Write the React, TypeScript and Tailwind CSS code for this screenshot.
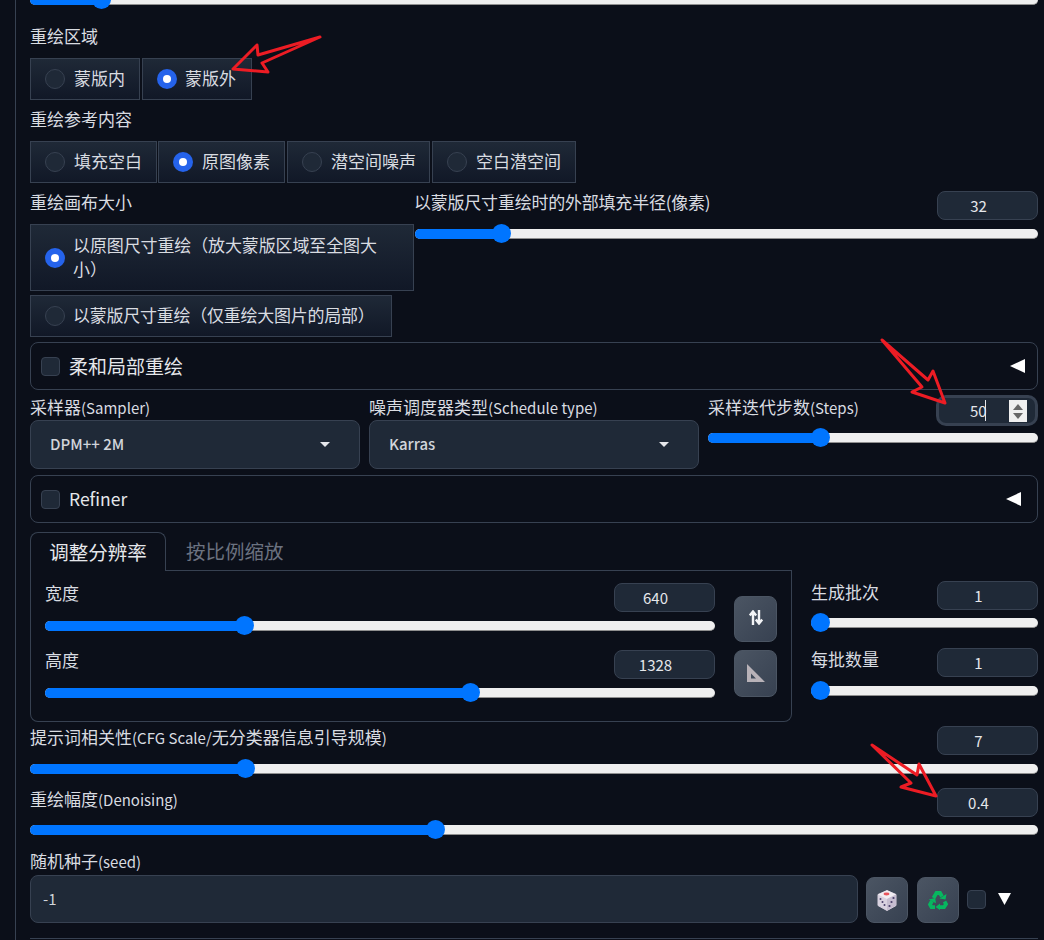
import React from "react";

const FONT = '"Noto Sans CJK SC", "Noto Sans", sans-serif';

function Slider({ thumb, className = "" }: { thumb: number; className?: string }) {
  return (
    <div className={`relative h-[10px] rounded-full bg-[#efefef] border-b border-[#8f8f8f] ${className}`}>
      <div className="absolute left-0 top-0 h-[10px] rounded-l-full bg-[#0075ff]" style={{ width: thumb }} />
      <div className="absolute top-[-5px] h-[19px] w-[19px] rounded-full bg-[#0075ff]" style={{ left: thumb - 9 }} />
    </div>
  );
}

function Latin({ children }: { children: React.ReactNode }) {
  return <span className="text-[15px]">{children}</span>;
}

function Label({ children, className = "" }: { children: React.ReactNode; className?: string }) {
  return <div className={`h-6 leading-6 text-[17px] text-[#d9dce1] whitespace-nowrap ${className}`}>{children}</div>;
}

function Num({ value, className = "" }: { value: string; className?: string }) {
  return (
    <div className={`w-[101px] h-[29px] shrink-0 rounded-lg border border-[#374151] bg-[#1f2937] pr-[18px] text-center text-[15px] leading-[27px] text-[#e5e7eb] ${className}`}>
      {value}
    </div>
  );
}

function Radio({ label, on, className = "", labelClass = "ml-[9px]" }: { label: React.ReactNode; on?: boolean; className?: string; labelClass?: string }) {
  return (
    <div className={`flex items-center border border-[#374151] bg-gradient-to-b from-[#1f2937] to-[#111827] pl-[14px] ${className}`}>
      {on ? (
        <span className="w-5 h-5 shrink-0 rounded-full bg-[#2563eb] flex items-center justify-center">
          <span className="w-2 h-2 rounded-full bg-white" />
        </span>
      ) : (
        <span className="w-5 h-5 shrink-0 rounded-full border border-[#374151] bg-[#1f2937]" />
      )}
      <span className={`pb-[2px] text-[17px] leading-[24px] text-[#d9dce1] ${labelClass}`}>{label}</span>
    </div>
  );
}

function Check({ className = "" }: { className?: string }) {
  return <span className={`block w-[19px] h-[19px] shrink-0 rounded border border-[#374151] bg-[#1f2937] ${className}`} />;
}

function Accordion({ title, triRight, titleClass }: { title: string; triRight: number; titleClass: string }) {
  return (
    <div className="h-[48px] rounded-lg border border-[#374151] flex items-center pl-[10px]">
      <Check />
      <span className={`ml-[9px] text-[#e5e7eb] ${titleClass}`}>{title}</span>
      <svg className="ml-auto" style={{ marginRight: triRight }} width="15" height="14" viewBox="0 0 15 14">
        <polygon points="0,7 15,0 15,14" fill="#ffffff" />
      </svg>
    </div>
  );
}

function Select({ value }: { value: string }) {
  return (
    <div className="h-[49px] rounded-lg border border-[#374151] bg-[#1f2937] flex items-center pl-[19px] pr-[29px] pb-px text-[15px] font-medium text-[#d1d5db]">
      <span>{value}</span>
      <svg className="ml-auto" width="10" height="5" viewBox="0 0 10 5">
        <polygon points="0,0 10,0 5,5" fill="#e5e7eb" />
      </svg>
    </div>
  );
}

function Dice() {
  return (
    <svg width="20" height="21" viewBox="0 0 20 21">
      <polygon points="10,0.5 19,4.5 19,15.5 10,20.5 1,15.5 1,4.5" fill="#d9d2e0" stroke="#d9d2e0" strokeWidth="1" strokeLinejoin="round" />
      <polygon points="10,0.5 19,4.5 10,9 1,4.5" fill="#f1edf2" />
      <polygon points="19,4.5 10,9 10,20.5 19,15.5" fill="#c6bdd0" />
      <ellipse cx="9.5" cy="4" rx="3" ry="1.4" fill="#e8545c" />
      <circle cx="3.5" cy="9" r="1" fill="#4a3f6b" />
      <circle cx="7.5" cy="15" r="1" fill="#4a3f6b" />
      <circle cx="5.5" cy="12" r="1" fill="#4a3f6b" />
      <circle cx="16.5" cy="8" r="1.1" fill="#4a3f6b" />
      <circle cx="14.5" cy="12" r="1.1" fill="#4a3f6b" />
      <circle cx="12.5" cy="16" r="1.1" fill="#4a3f6b" />
    </svg>
  );
}

function Recycle() {
  return (
    <svg width="20" height="19" viewBox="0 0 20 19">
      <g fill="none" stroke="#07b75f" strokeWidth="3.8">
        <path d="M5.5 7 8.5 2H12L14 5.5" />
        <path d="M7 16.2H3.5L2 13.5 4 10" />
        <path d="M12 16.2H16L18 13 16.5 10.5" />
      </g>
      <g fill="#07b75f">
        <polygon points="11.5,7.5 17.5,8.5 18.5,3" />
        <polygon points="0.8,8.5 7.2,7 8,12.2" />
        <polygon points="12,12.5 12,19 7.5,16" />
      </g>
    </svg>
  );
}

function ToolButton({ children, className = "" }: { children: React.ReactNode; className?: string }) {
  return (
    <div className={`flex items-center justify-center rounded-lg border border-[#4b5563] bg-gradient-to-br from-[#4b5563] to-[#374151] ${className}`}>
      {children}
    </div>
  );
}

export default function App() {
  return (
    <div className="relative w-[1044px] h-[940px] overflow-hidden bg-[#0b0f19]" style={{ fontFamily: FONT }}>
      <div className="ml-[15px] h-[945px] border-l border-[#374151] pl-[14px] pr-[6px]">
        <Slider thumb={71} className="-mt-[5px]" />

        <Label className="mt-[19px]">重绘区域</Label>
        <div className="mt-[10px] flex gap-[2px]">
          <Radio label="蒙版内" className="w-[110px] h-[42px]" />
          <Radio label="蒙版外" on className="w-[110px] h-[42px]" labelClass="ml-2" />
        </div>

        <Label className="mt-[7px]">重绘参考内容</Label>
        <div className="mt-[10px] flex gap-[2px]">
          <Radio label="填充空白" className="w-[127px] h-[42px]" />
          <Radio label="原图像素" on className="-ml-px w-[127px] h-[42px]" />
          <Radio label="潜空间噪声" className="w-[143px] h-[42px]" />
          <Radio label="空白潜空间" className="w-[144px] h-[42px]" />
        </div>

        <div className="mt-[8px] flex gap-px">
          <div className="w-[384px] shrink-0">
            <Label className="-mt-px">重绘画布大小</Label>
            <Radio label="以原图尺寸重绘（放大蒙版区域至全图大小）" on className="mt-[10px] h-[67px] pr-[34px]" labelClass="ml-2 tracking-[-0.12px]" />
            <Radio label="以蒙版尺寸重绘（仅重绘大图片的局部）" className="mt-1 w-[362px] h-[42px] whitespace-nowrap" labelClass="ml-2 tracking-[-0.25px]" />
          </div>
          <div className="flex-1">
            <div className="flex justify-between">
              <Label className="-mt-px -ml-px tracking-[-0.22px]">以蒙版尺寸重绘时的外部填充半径(像素)</Label>
              <Num value="32" />
            </div>
            <Slider thumb={86} className="mt-[9px]" />
          </div>
        </div>

        <div className="mt-[5px]">
          <Accordion title="柔和局部重绘" triRight={12} titleClass="text-[19px]" />
        </div>

        <div className="mt-[5px] flex gap-[9px]">
          <div className="w-[330px] shrink-0">
            <Label>采样器<Latin>(Sampler)</Latin></Label>
            <div className="mt-px"><Select value="DPM++ 2M" /></div>
          </div>
          <div className="w-[330px] shrink-0">
            <Label>噪声调度器类型<Latin>(Schedule type)</Latin></Label>
            <div className="mt-px"><Select value="Karras" /></div>
          </div>
          <div className="flex-1">
            <div className="flex justify-between">
              <Label>采样迭代步数<Latin>(Steps)</Latin></Label>
              <div className="relative w-[102px] h-[31px] rounded-[10px] border-[3px] border-[#374151] bg-[#1f2937]">
                <span className="absolute left-[31px] top-0 text-[15px] leading-[25px] text-[#e5e7eb]">50</span>
                <span className="absolute left-[46px] top-[2px] w-px h-[21px] bg-[#e5e7eb]" />
                <span className="absolute left-[70px] top-[2px] flex h-[22px] w-[18px] flex-col items-center justify-center gap-[3px] bg-[#efefef]">
                  <svg width="10" height="6" viewBox="0 0 10 6"><polygon points="5,0 10,6 0,6" fill="#666" /></svg>
                  <svg width="10" height="6" viewBox="0 0 10 6"><polygon points="0,0 10,0 5,6" fill="#666" /></svg>
                </span>
              </div>
            </div>
            <Slider thumb={112} className="mt-[7px]" />
          </div>
        </div>

        <div className="mt-[6px]">
          <Accordion title="Refiner" triRight={16} titleClass="text-[17.5px]" />
        </div>

        <div className="mt-[9px] flex">
          <div className="w-[762px] shrink-0">
            <div className="flex h-[39px]">
              <div className="w-[136px] h-[39px] rounded-t-lg border border-b-0 border-[#374151] bg-[#0b0f19] text-center text-[19.5px] leading-[38px] text-[#e5e7eb]">调整分辨率</div>
              <div className="flex-1 border-b border-[#374151] pl-5 text-[19.5px] leading-[38px] text-[#6b7280]">按比例缩放</div>
            </div>
            <div className="h-[151px] rounded-b-lg border border-t-0 border-[#374151] pl-[14px] pr-[14px] flex">
              <div className="w-[670px] shrink-0">
                <div className="mt-[12px] flex justify-between">
                  <Label className="-mt-[2px]">宽度</Label>
                  <Num value="640" />
                </div>
                <Slider thumb={199} className="mt-[9px]" />
                <div className="mt-[19px] flex justify-between">
                  <Label className="-mt-[2px]">高度</Label>
                  <Num value="1328" />
                </div>
                <Slider thumb={425} className="mt-[9px]" />
              </div>
              <div className="ml-[19px]">
                <ToolButton className="mt-[25px] w-[43px] h-[46px] pb-[3px]">
                  <svg width="14" height="15" viewBox="0 0 14 15" fill="none" stroke="#f3f4f6" strokeWidth="2.4">
                    <path d="M4 15V2M0.8 5.5 4 1.5 7.2 5.5" />
                    <path d="M10 0V13M6.8 9.5 10 13.5 13.2 9.5" />
                  </svg>
                </ToolButton>
                <ToolButton className="mt-[8px] w-[43px] h-[47px]">
                  <svg width="20" height="19" viewBox="0 0 20 19">
                    <path fillRule="evenodd" d="M1 0 19 18 1 18Z M5 9.5 5 14.5 10 14.5Z" fill="#b8b2b8" />
                  </svg>
                </ToolButton>
              </div>
            </div>
          </div>
          <div className="ml-[19px] flex-1">
            <div className="mt-[49px] flex justify-between">
              <Label className="-mt-[1px]">生成批次</Label>
              <Num value="1" />
            </div>
            <Slider thumb={9} className="mt-2" />
            <div className="mt-[20px] flex justify-between">
              <Label className="-mt-[1px]">每批数量</Label>
              <Num value="1" />
            </div>
            <Slider thumb={9} className="mt-[9px]" />
          </div>
        </div>

        <div className="mt-1 flex justify-between">
          <Label className="-mt-px">提示词相关性<Latin>(CFG Scale/</Latin>无分类器信息引导规模<Latin>)</Latin></Label>
          <Num value="7" />
        </div>
        <Slider thumb={215} className="mt-[9px]" />

        <div className="mt-[14px] flex justify-between">
          <Label className="-mt-px">重绘幅度<Latin>(Denoising)</Latin></Label>
          <Num value="0.4" />
        </div>
        <Slider thumb={405} className="mt-2" />

        <Label className="mt-[14px]">随机种子<Latin>(seed)</Latin></Label>
        <div className="mt-[2px] flex items-start">
          <div className="w-[828px] h-[48px] rounded-lg border border-[#374151] bg-[#1f2937] pl-3 text-[15px] leading-[46px] text-[#d1d5db]">-1</div>
          <ToolButton className="ml-2 mt-[2px] w-[42px] h-[46px]"><Dice /></ToolButton>
          <ToolButton className="ml-[9px] mt-[2px] w-[42px] h-[46px]"><Recycle /></ToolButton>
          <Check className="ml-2 mt-[15px]" />
          <svg className="ml-3 mt-[18px]" width="13" height="12" viewBox="0 0 13 12">
            <polygon points="0,0 13,0 6.5,12" fill="#ffffff" />
          </svg>
        </div>
        <div className="mt-[15px] h-px bg-[#374151]" />
      </div>

      <svg className="absolute inset-0 pointer-events-none" width="1044" height="940" fill="none" stroke="#ed1c24" strokeWidth="3">
        <path d="M320 37 258 55 257 45 233 69 268 72 262 63Z" strokeLinejoin="round" />
        <path d="M882 340 928 380 933 371 945 403 912 392 922 387Z" strokeLinejoin="round" />
        <path d="M872 745 917 775 919 764 936 796 901 787 911 783Z" strokeLinejoin="round" />
      </svg>
    </div>
  );
}
